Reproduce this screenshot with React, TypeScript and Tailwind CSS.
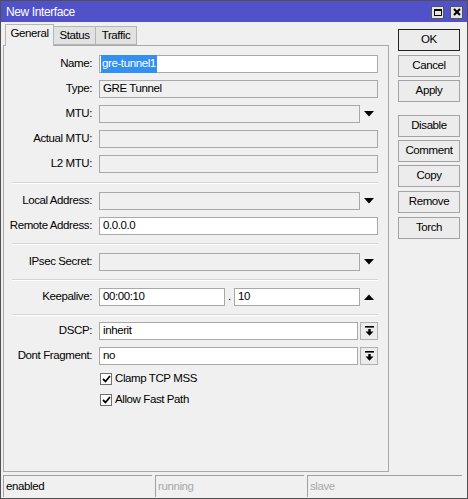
import React from 'react';

const font = { fontFamily: '"Liberation Sans", Arial, sans-serif' };

function DownArrow() {
  return (
    <svg width="10" height="6" viewBox="0 0 10 6"><path d="M0 0 H10 L5 5.5 Z" fill="#000" /></svg>
  );
}

function UpArrow() {
  return (
    <svg width="10" height="6" viewBox="0 0 10 6"><path d="M0 6 H10 L5 0.5 Z" fill="#000" /></svg>
  );
}

function Label({ text }: { text: string }) {
  return <div className="w-[89px] shrink-0 pr-[1px] text-right whitespace-nowrap">{text}</div>;
}

function Field({ value, editable, w, children }: { value?: string; editable?: boolean; w: string; children?: React.ReactNode }) {
  return (
    <div className={`h-[18px] ${w} border border-[#a9a9a9] flex items-center pl-[3px] ${editable ? 'bg-white' : 'bg-[#f0f0f0]'}`}>
      {children ?? value}
    </div>
  );
}

function Sep({ mt, mb }: { mt: string; mb: string }) {
  return <div className={`${mt} ${mb} ml-[8px] w-[366px] border-t border-[#d4d4d4] border-b border-b-white`} />;
}

function Check({ label, mt }: { label: string; mt: string }) {
  return (
    <div className={`flex items-center h-[14px] ${mt} ml-[96px]`}>
      <div className="w-[12px] h-[12px] border border-[#707070] bg-white flex items-center justify-center">
        <svg width="9" height="8" viewBox="0 0 9 8"><path d="M1 4 L3.5 6.5 L8 1" stroke="#000" strokeWidth="1.8" fill="none" /></svg>
      </div>
      <span className="ml-[3px]">{label}</span>
    </div>
  );
}

function Btn({ label, mt, primary }: { label: string; mt: string; primary?: boolean }) {
  return (
    <div className={`${mt} w-[62px] h-[22px] flex items-center justify-center bg-[#ececec] border ${primary ? 'border-[#222]' : 'border-[#a3a3a3]'}`}>
      {label}
    </div>
  );
}

export default function App() {
  return (
    <div style={font} className="w-[468px] h-[499px] border border-[#505050] bg-[#f0f0f0] flex flex-col text-[11.5px] tracking-[-0.4px] text-black overflow-hidden">
      {/* title bar */}
      <div className="h-[21px] bg-[#5151c9] flex items-center justify-between pl-[5px] pr-[4px]">
        <span className="text-white text-[12px]">New Interface</span>
        <div className="flex gap-[6px] pt-[1px]">
          <div className="w-[13px] h-[13px] bg-[#e4e4e4] border border-[#555] flex items-center justify-center">
            <div className="w-[8px] h-[7px] border border-black border-t-2" />
          </div>
          <div className="w-[13px] h-[13px] bg-[#e4e4e4] border border-[#555] flex items-center justify-center">
            <svg width="8" height="8" viewBox="0 0 8 8"><path d="M1 1 L7 7 M7 1 L1 7" stroke="#000" strokeWidth="2" /></svg>
          </div>
        </div>
      </div>

      <div className="flex flex-1">
        {/* left: tabs + panel */}
        <div className="w-[386px] ml-[2px] flex flex-col">
          <div className="h-[23px] flex items-end pl-[2px]">
            <div className="relative z-10 -mb-px h-[22px] w-[49px] border border-b-0 border-[#b5b5b5] bg-[#f0f0f0] flex items-center justify-center pb-[3px]">General</div>
            <div className="h-[19px] w-[42px] border border-l-0 border-[#b5b5b5] bg-[#e2e2e2] flex items-center justify-center">Status</div>
            <div className="h-[19px] w-[41px] border border-l-0 border-[#b5b5b5] bg-[#e2e2e2] flex items-center justify-center">Traffic</div>
          </div>
          <div className="h-[427px] border border-[#a9a9a9] flex flex-col pt-[9px]">
            <div className="flex items-center gap-[6px]">
              <Label text="Name:" />
              <Field w="w-[279px]" editable>
                <span className="bg-[#3390f0] text-white px-[1px] -ml-[2px]">gre-tunnel1</span>
              </Field>
            </div>
            <div className="flex items-center gap-[6px] mt-[7px]">
              <Label text="Type:" />
              <Field w="w-[279px]" value="GRE Tunnel" />
            </div>
            <div className="flex items-center gap-[6px] mt-[7px]">
              <Label text="MTU:" />
              <Field w="w-[261px]" />
              <div className="w-[18px] -ml-[6px] flex justify-center"><DownArrow /></div>
            </div>
            <div className="flex items-center gap-[6px] mt-[7px]">
              <Label text="Actual MTU:" />
              <Field w="w-[279px]" />
            </div>
            <div className="flex items-center gap-[6px] mt-[7px]">
              <Label text="L2 MTU:" />
              <Field w="w-[279px]" />
            </div>

            <Sep mt="mt-[9px]" mb="mb-[8px]" />

            <div className="flex items-center gap-[6px]">
              <Label text="Local Address:" />
              <Field w="w-[261px]" />
              <div className="w-[18px] -ml-[6px] flex justify-center"><DownArrow /></div>
            </div>
            <div className="flex items-center gap-[6px] mt-[7px]">
              <Label text="Remote Address:" />
              <Field w="w-[279px]" editable value="0.0.0.0" />
            </div>

            <Sep mt="mt-[8px]" mb="mb-[8px]" />

            <div className="flex items-center gap-[6px]">
              <Label text="IPsec Secret:" />
              <Field w="w-[261px]" />
              <div className="w-[18px] -ml-[6px] flex justify-center"><DownArrow /></div>
            </div>

            <Sep mt="mt-[8px]" mb="mb-[7px]" />

            <div className="flex items-center gap-[6px]">
              <Label text="Keepalive:" />
              <div className="flex items-center">
                <Field w="w-[126px]" editable value="00:00:10" />
                <div className="w-[9px] text-center">.</div>
                <Field w="w-[126px]" editable value="10" />
              </div>
              <div className="w-[18px] -ml-[6px] flex justify-center"><UpArrow /></div>
            </div>

            <Sep mt="mt-[8px]" mb="mb-[6px]" />

            <div className="flex items-center gap-[6px]">
              <Label text="DSCP:" />
              <div className="flex items-center gap-[2px]">
                <Field w="w-[259px]" editable value="inherit" />
                <div className="w-[18px] h-[18px] border border-[#b0b0b0] bg-[#ececec] flex items-center justify-center">
                  <svg width="9" height="10" viewBox="0 0 9 10"><rect x="0" y="0" width="9" height="1.6" fill="#000" /><rect x="3.3" y="3" width="2.4" height="3" fill="#000" /><path d="M0.5 5.5 H8.5 L4.5 9.8 Z" fill="#000" /></svg>
                </div>
              </div>
            </div>
            <div className="flex items-center gap-[6px] mt-[7px]">
              <Label text="Dont Fragment:" />
              <div className="flex items-center gap-[2px]">
                <Field w="w-[259px]" editable value="no" />
                <div className="w-[18px] h-[18px] border border-[#b0b0b0] bg-[#ececec] flex items-center justify-center">
                  <svg width="9" height="10" viewBox="0 0 9 10"><rect x="0" y="0" width="9" height="1.6" fill="#000" /><rect x="3.3" y="3" width="2.4" height="3" fill="#000" /><path d="M0.5 5.5 H8.5 L4.5 9.8 Z" fill="#000" /></svg>
                </div>
              </div>
            </div>

            <Check label="Clamp TCP MSS" mt="mt-[7px]" />
            <Check label="Allow Fast Path" mt="mt-[7px]" />
          </div>
        </div>

        {/* right: buttons */}
        <div className="ml-[9px] pt-[7px] flex flex-col">
          <Btn label="OK" mt="mt-0" primary />
          <Btn label="Cancel" mt="mt-[4px]" />
          <Btn label="Apply" mt="mt-[3px]" />
          <Btn label="Disable" mt="mt-[13px]" />
          <Btn label="Comment" mt="mt-[3px]" />
          <Btn label="Copy" mt="mt-[3px]" />
          <Btn label="Remove" mt="mt-[4px]" />
          <Btn label="Torch" mt="mt-[4px]" />
        </div>
      </div>

      {/* status bar */}
      <div className="h-[22px] mb-[1px] flex pl-[2px] gap-[3px]">
        <div className="w-[149px] border-t border-l border-[#a0a0a0] pl-[2px] flex items-center">enabled</div>
        <div className="w-[149px] border-t border-l border-[#a0a0a0] pl-[2px] flex items-center text-[#a8a8a8]">running</div>
        <div className="w-[155px] border-t border-l border-[#a0a0a0] pl-[2px] flex items-center text-[#a8a8a8]">slave</div>
      </div>
    </div>
  );
}
